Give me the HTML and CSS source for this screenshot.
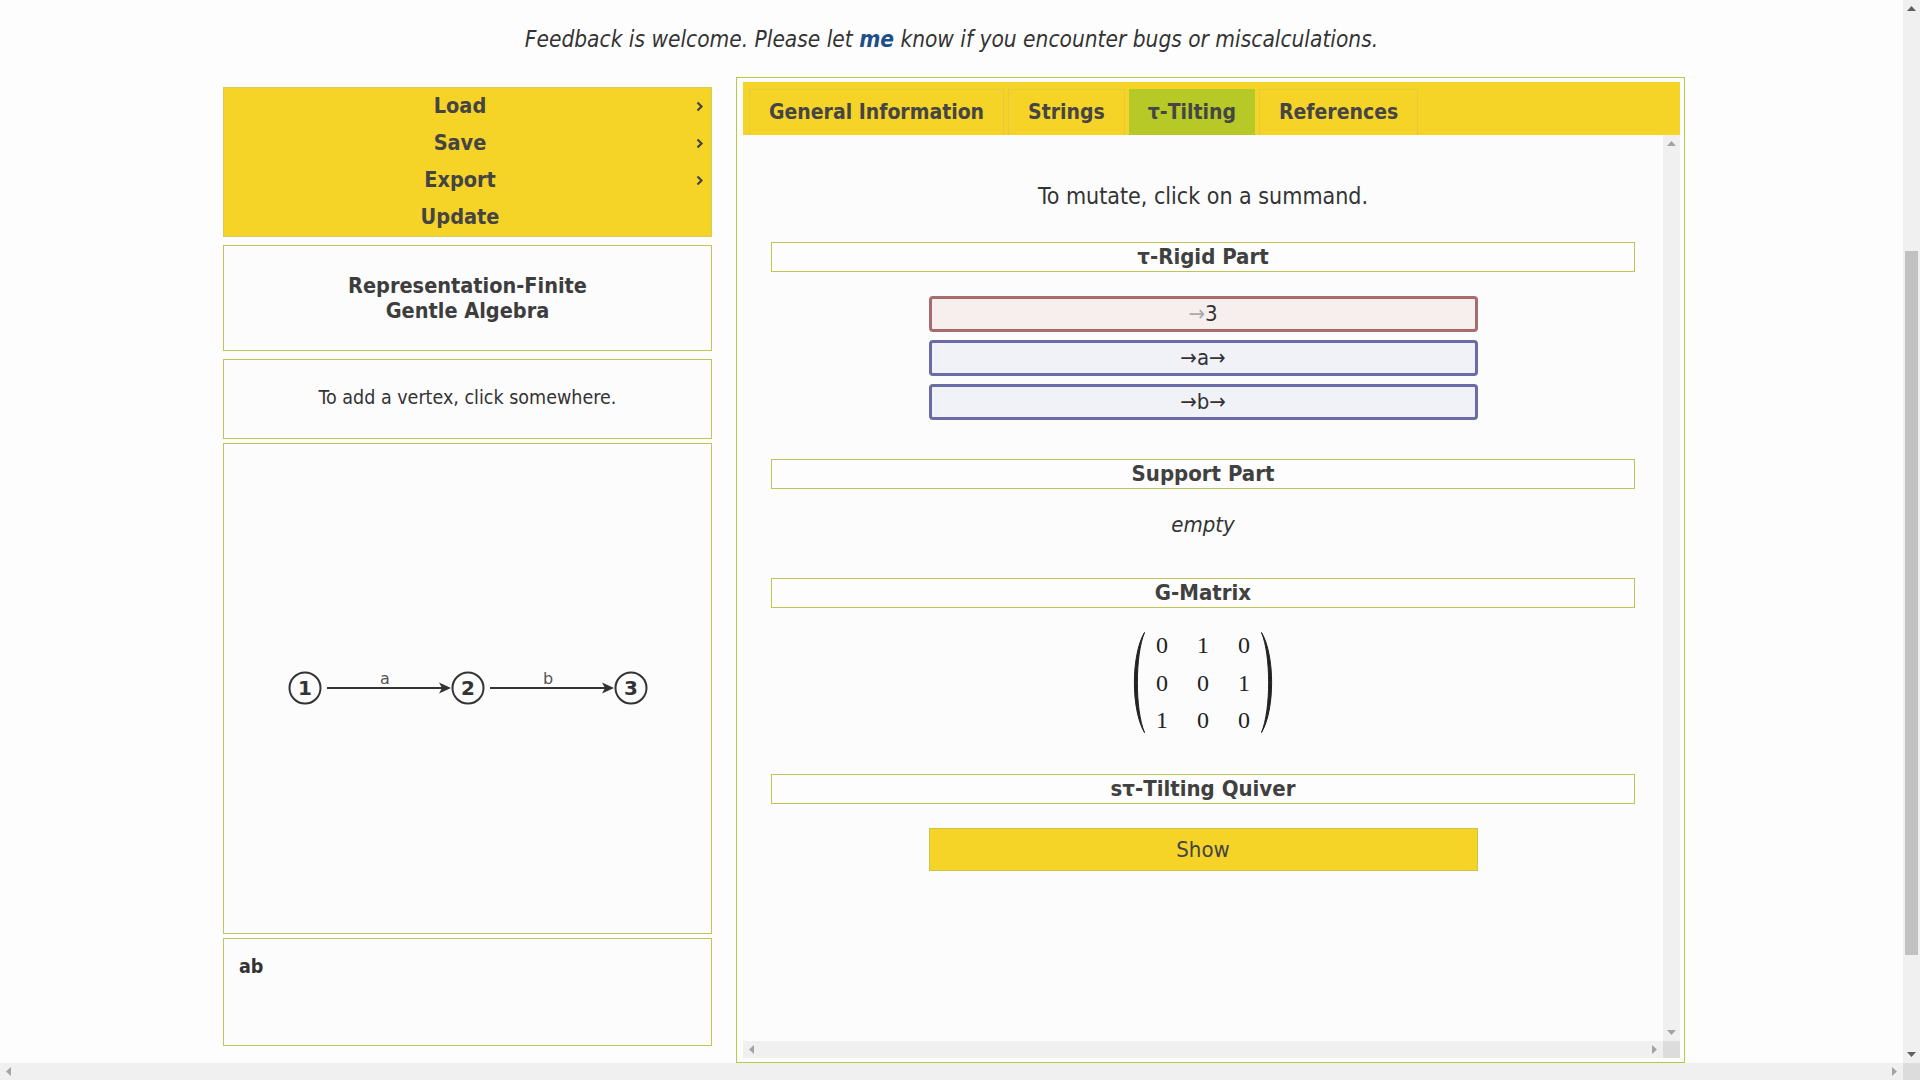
FILE: index.html
```html
<!DOCTYPE html>
<html lang="en">
<head>
<meta charset="utf-8">
<title>Gentle Algebra</title>
<link rel="stylesheet" href="styles.css">
</head>
<body>
<div class="screen">
  <div class="page">
    <p class="feedback">Feedback is welcome. Please let <a href="#">me</a> know if you encounter bugs or miscalculations.</p>
    <div class="main">
      <div class="left">
        <div class="menu">
          <div class="menu-item"><span class="label">Load</span><span class="chev"><svg width="8" height="11" viewBox="0 0 8 11"><polyline points="1.5,1.5 5.5,5.5 1.5,9.5" fill="none" stroke="#444" stroke-width="2.2"/></svg></span></div>
          <div class="menu-item"><span class="label">Save</span><span class="chev"><svg width="8" height="11" viewBox="0 0 8 11"><polyline points="1.5,1.5 5.5,5.5 1.5,9.5" fill="none" stroke="#444" stroke-width="2.2"/></svg></span></div>
          <div class="menu-item"><span class="label">Export</span><span class="chev"><svg width="8" height="11" viewBox="0 0 8 11"><polyline points="1.5,1.5 5.5,5.5 1.5,9.5" fill="none" stroke="#444" stroke-width="2.2"/></svg></span></div>
          <div class="menu-item"><span class="label">Update</span><span class="chev"></span></div>
        </div>
        <div class="box title">Representation-Finite<br>Gentle Algebra</div>
        <div class="box instr">To add a vertex, click somewhere.</div>
        <div class="box canvas">
          <svg class="quiver" width="487" height="489" viewBox="0 0 487 489">
            <g stroke="#333" stroke-width="2" fill="none">
              <circle cx="81" cy="244" r="15.5"/>
              <circle cx="244" cy="244" r="15.5"/>
              <circle cx="407" cy="244" r="15.5"/>
              <line x1="103" y1="244" x2="220" y2="244"/>
              <line x1="266" y1="244" x2="383" y2="244"/>
            </g>
            <g fill="#333">
              <path d="M227,244 L215,238.5 L218,244 L215,249.5 Z"/>
              <path d="M390,244 L378,238.5 L381,244 L378,249.5 Z"/>
            </g>
            <g class="node-label" text-anchor="middle">
              <text x="81" y="251">1</text>
              <text x="244" y="251">2</text>
              <text x="407" y="251">3</text>
            </g>
            <g class="edge-label" text-anchor="middle">
              <text x="161" y="240">a</text>
              <text x="324" y="240">b</text>
            </g>
          </svg>
        </div>
        <div class="box word">ab</div>
      </div>

      <div class="tabs">
        <ul class="tabnav">
          <li class="tab">General Information</li>
          <li class="tab">Strings</li>
          <li class="tab active">τ-Tilting</li>
          <li class="tab">References</li>
        </ul>
        <div class="scroller">
          <div class="panel">
            <p class="intro">To mutate, click on a summand.</p>

            <section class="sec sec-rigid">
              <h3 class="sec-head">τ-Rigid Part</h3>
              <div class="summands">
                <div class="summand s-red"><span class="dim">→</span>3</div>
                <div class="summand s-blue">→a→</div>
                <div class="summand s-blue">→b→</div>
              </div>
            </section>

            <section class="sec sec-support">
              <h3 class="sec-head">Support Part</h3>
              <p class="empty">empty</p>
            </section>

            <section class="sec sec-matrix">
              <h3 class="sec-head">G-Matrix</h3>
              <div class="matrix">
                <svg class="paren" width="16" height="101" viewBox="0 0 16 101"><path d="M14.5,0.5 C1,23 1,78 14.5,100.5 C5,78 5,23 14.5,0.5 Z" fill="#222" stroke="#222" stroke-width="1"/></svg>
                <div class="mgrid">
                  <span>0</span><span>1</span><span>0</span>
                  <span>0</span><span>0</span><span>1</span>
                  <span>1</span><span>0</span><span>0</span>
                </div>
                <svg class="paren" width="16" height="101" viewBox="0 0 16 101"><path d="M1.5,0.5 C15,23 15,78 1.5,100.5 C11,78 11,23 1.5,0.5 Z" fill="#222" stroke="#222" stroke-width="1"/></svg>
              </div>
            </section>

            <section class="sec">
              <h3 class="sec-head">sτ-Tilting Quiver</h3>
              <button class="show">Show</button>
            </section>
          </div>
          <div class="vbar inner">
            <svg width="9" height="5" viewBox="0 0 9 5"><path d="M0,5 L4.5,0 L9,5 Z" fill="#a3a3a3"/></svg>
            <svg width="9" height="5" viewBox="0 0 9 5"><path d="M0,0 L4.5,5 L9,0 Z" fill="#a3a3a3"/></svg>
          </div>
          <div class="hbar inner">
            <svg width="5" height="9" viewBox="0 0 5 9"><path d="M5,0 L0,4.5 L5,9 Z" fill="#a3a3a3"/></svg>
            <svg width="5" height="9" viewBox="0 0 5 9"><path d="M0,0 L5,4.5 L0,9 Z" fill="#a3a3a3"/></svg>
          </div>
          <div class="corner"></div>
        </div>
      </div>
    </div>
  </div>

  <div class="vbar page-v">
    <svg width="9" height="5" viewBox="0 0 9 5"><path d="M0,5 L4.5,0 L9,5 Z" fill="#606060"/></svg>
    <div class="track"><div class="thumb"></div></div>
    <svg width="9" height="5" viewBox="0 0 9 5"><path d="M0,0 L4.5,5 L9,0 Z" fill="#606060"/></svg>
  </div>
  <div class="hbar page-h">
    <svg width="5" height="9" viewBox="0 0 5 9"><path d="M5,0 L0,4.5 L5,9 Z" fill="#a3a3a3"/></svg>
    <svg width="5" height="9" viewBox="0 0 5 9"><path d="M0,0 L5,4.5 L0,9 Z" fill="#a3a3a3"/></svg>
  </div>
  <div class="corner"></div>
</div>
</body>
</html>
```

FILE: styles.css
```css
* { box-sizing: border-box; }

html, body {
  margin: 0;
  padding: 0;
  overflow: hidden;
}

body {
  font-family: "DejaVu Sans Condensed", "DejaVu Sans", sans-serif;
  color: #333;
  background: #fdfdfd;
}

.screen {
  display: grid;
  grid-template-columns: 1903px 17px;
  grid-template-rows: 1063px 17px;
  width: 1920px;
  height: 1080px;
}

.page {
  overflow: hidden;
  background: #fdfdfd;
}

.feedback {
  margin: 0;
  padding-top: 27px;
  line-height: 24px;
  font-size: 22.5px;
  font-style: italic;
  text-align: center;
  color: #333;
}

.feedback a {
  color: #1d4f8a;
  font-weight: bold;
  text-decoration: none;
}

.main {
  display: flex;
  align-items: flex-start;
  gap: 24px;
  margin: 26px 0 0 223px;
}

/* left column */
.left {
  width: 489px;
  margin-top: 10px;
  display: flex;
  flex-direction: column;
  gap: 4px;
}

.box {
  border: 1px solid #c2c65a;
  background: #fcfcfc;
}

.menu {
  height: 150px;
  margin-bottom: 4px;
  background: #f6d327;
  border: 1px solid #d2cc5c;
}

.menu-item {
  display: grid;
  grid-template-columns: 1fr 15px;
  height: 37px;
  line-height: 36px;
  font-size: 21.5px;
  font-weight: bold;
  color: #444;
}

.menu-item .label { text-align: center; }

.chev {
  display: flex;
  align-items: center;
  justify-content: flex-start;
}

.title {
  height: 106px;
  margin-bottom: 4px;
  display: flex;
  align-items: center;
  justify-content: center;
  text-align: center;
  font-size: 21.5px;
  font-weight: bold;
  line-height: 25px;
  color: #3d3d3d;
}

.instr {
  height: 80px;
  padding-bottom: 4px;
  display: flex;
  align-items: center;
  justify-content: center;
  font-size: 19.5px;
  color: #333;
}

.canvas {
  height: 491px;
}

.quiver { display: block; }

.node-label text {
  font-family: "DejaVu Sans", sans-serif;
  font-weight: bold;
  font-size: 20px;
  fill: #333;
}

.edge-label text {
  font-family: "DejaVu Sans", sans-serif;
  font-size: 16px;
  fill: #555;
}

.word {
  height: 108px;
  padding: 16px 15px;
  font-size: 19.5px;
  font-weight: bold;
  line-height: 24px;
  color: #333;
}

/* right tabs */
.tabs {
  width: 949px;
  height: 986px;
  border: 1px solid #b8c94a;
  background: #fcfcfc;
  padding: 4px 4px 4px 6px;
  display: flex;
  flex-direction: column;
}

.tabnav {
  list-style: none;
  margin: 0;
  height: 53px;
  flex: none;
  padding: 7px 0 0 6px;
  background: #f6d327;
  display: flex;
  gap: 4px;
}

.tab {
  height: 46px;
  padding: 0 19px;
  line-height: 45px;
  border: 1px solid #e2cb40;
  border-bottom: none;
  font-size: 21px;
  font-weight: bold;
  color: #454545;
  white-space: nowrap;
}

.tab.active {
  background: #b6c926;
  border-color: #b6c926;
  padding: 0 18px;
}

.scroller {
  flex: 1;
  display: grid;
  grid-template-columns: 1fr 17px;
  grid-template-rows: 1fr 17px;
  background: #fcfcfc;
  min-height: 0;
}

.panel {
  overflow: hidden;
  padding: 49px 28px 0;
  text-align: center;
  font-size: 23px;
  color: #333;
}

.intro {
  margin: 0 0 34px;
  line-height: 24px;
}

.sec { margin-bottom: 39px; }
.sec-support { margin-bottom: 41px; }
.sec-matrix { margin-bottom: 41px; }

.sec-head {
  margin: 0 0 24px;
  height: 30px;
  line-height: 28px;
  border: 1px solid #bfc656;
  background: #fdfdfd;
  font-size: 22px;
  font-weight: bold;
  color: #404040;
}

.summands {
  display: flex;
  flex-direction: column;
  align-items: center;
  gap: 8px;
}

.summand {
  width: 549px;
  height: 36px;
  line-height: 30px;
  border: 3px solid;
  border-radius: 4px;
  font-size: 22px;
  color: #333;
}

.s-red {
  border-color: #a86b6e;
  background: #f7eeee;
}

.s-red .dim { color: #a9a9a9; }

.s-blue {
  border-color: #6b6ba6;
  background: #f1f1f8;
}

.empty {
  margin: 0;
  line-height: 24px;
  font-style: italic;
  font-size: 22px;
}

.matrix {
  display: flex;
  justify-content: center;
  align-items: center;
  height: 101px;
  gap: 7px;
}

.mgrid {
  display: grid;
  grid-template-columns: repeat(3, 12px);
  grid-auto-rows: 37.5px;
  column-gap: 29px;
  padding: 0 3px;
  font-family: "Liberation Serif", "DejaVu Serif", serif;
  font-size: 24px;
  color: #222;
  line-height: 38.5px;
}

.paren { display: block; flex: none; }

.show {
  display: block;
  margin: 0 auto;
  width: 549px;
  height: 43px;
  border: 1px solid #c9c44a;
  background: #f6d327;
  font-family: inherit;
  font-size: 22px;
  color: #444;
  padding: 0;
}

/* scrollbars */
.vbar {
  background: #f0f0f0;
  display: flex;
  flex-direction: column;
  align-items: center;
  justify-content: space-between;
  padding: 6px 0;
}

.hbar {
  background: #f0f0f0;
  display: flex;
  align-items: center;
  justify-content: space-between;
  padding: 0 6px;
}

.corner { background: #dcdcdc; }

.page-v .track {
  flex: 1;
  width: 100%;
  padding: 240px 2px 0;
}

.page-v .thumb {
  height: 704px;
  background: #c1c1c1;
}
```
